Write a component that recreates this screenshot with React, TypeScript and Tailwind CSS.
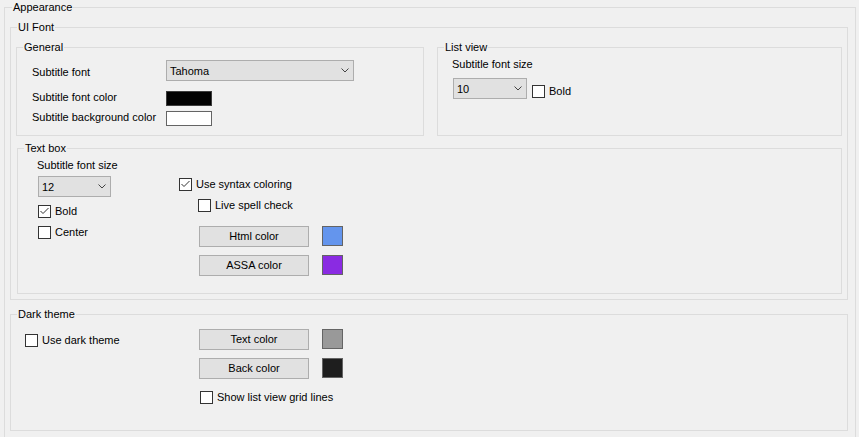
import React from "react";

const FONT = "font-['Liberation_Sans',Arial,sans-serif]";

function Group({
  label,
  className,
  legendClass,
  children,
}: {
  label: string;
  className: string;
  legendClass?: string;
  children?: React.ReactNode;
}) {
  return (
    <fieldset className={"border border-[#dcdcdc] " + className}>
      <legend className={"px-[1px] leading-[15px] " + (legendClass ?? "ml-[6px]")}>{label}</legend>
      {children}
    </fieldset>
  );
}

function Combo({ value, className }: { value: string; className: string }) {
  return (
    <div className={"flex h-[21px] border border-[#adadad] bg-[#e1e1e1] " + className}>
      <span className="flex-1 pl-[3px] pt-[4px] leading-[13px]">{value}</span>
      <svg width="8" height="5" viewBox="0 0 8 5" className="mt-[7px] mr-[4px]">
        <polyline points="0.5,0.5 4,4 7.5,0.5" fill="none" stroke="#444" strokeWidth="1" />
      </svg>
    </div>
  );
}

function Check({ checked, label, className }: { checked?: boolean; label: string; className?: string }) {
  return (
    <div className={"flex items-center " + (className ?? "")}>
      <div className="w-[13px] h-[13px] border border-[#333333] bg-white shrink-0">
        {checked && (
          <svg width="11" height="11" viewBox="0 0 11 11">
            <polyline points="1.5,5 4,7.5 9.5,2" fill="none" stroke="#333" strokeWidth="1" />
          </svg>
        )}
      </div>
      <span className="ml-[4px] leading-[13px] whitespace-nowrap">{label}</span>
    </div>
  );
}

function ColorButton({ label, swatch, className }: { label: string; swatch: string; className?: string }) {
  return (
    <div className={"flex items-start " + (className ?? "")}>
      <div className="w-[110px] h-[21px] border border-[#adadad] bg-[#e1e1e1] flex items-center justify-center leading-[13px]">
        {label}
      </div>
      <div className={"ml-[13px] w-[21px] h-[20px] border border-[#646464] " + swatch} />
    </div>
  );
}

export default function App() {
  return (
    <div className={"w-[859px] h-[437px] overflow-hidden bg-[#f0f0f0] text-[11px] text-black " + FONT}>
      <Group label="Appearance" className="ml-[4px] w-[852px] h-[470px]" legendClass="ml-[7px]">
        <div className="pt-[5px] pl-[5px]">
          <Group label="UI Font" className="w-[838px] h-[280px]">
            <div className="pt-[5px] pl-[5px] flex gap-[13px]">
              <Group label="General" className="w-[408px] h-[96px]">
                <div className="pl-[15px] pt-[5px]">
                  <div className="flex items-start h-[21px]">
                    <span className="w-[134px] mt-[6px] leading-[13px]">Subtitle font</span>
                    <Combo value="Tahoma" className="w-[188px]" />
                  </div>
                  <div className="flex items-start mt-[10px]">
                    <span className="w-[134px] leading-[13px]">Subtitle font color</span>
                    <div className="w-[46px] h-[15px] border border-[#3c3c3c] bg-black" />
                  </div>
                  <div className="flex items-start mt-[5px]">
                    <span className="w-[134px] leading-[13px]">Subtitle background color</span>
                    <div className="w-[46px] h-[15px] border border-[#646464] bg-white" />
                  </div>
                </div>
              </Group>
              <Group label="List view" className="w-[405px] h-[96px]">
                <div className="pl-[14px] pt-[3px]">
                  <div className="leading-[13px]">Subtitle font size</div>
                  <div className="flex items-start mt-[7px] pl-[1px]">
                    <Combo value="10" className="w-[74px]" />
                    <Check label="Bold" className="ml-[5px] mt-[7px]" />
                  </div>
                </div>
              </Group>
            </div>
            <div className="mt-[5px] ml-[6px]">
              <Group label="Text box" className="w-[825px] h-[153px]">
                <div className="flex pt-[3px]">
                  <div className="w-[161px] pl-[19px]">
                    <div className="leading-[13px]">Subtitle font size</div>
                    <Combo value="12" className="mt-[4px] ml-[1px] w-[73px]" />
                    <Check checked label="Bold" className="mt-[8px] ml-[1px]" />
                    <Check label="Center" className="mt-[8px] ml-[1px]" />
                  </div>
                  <div>
                    <Check checked label="Use syntax coloring" className="mt-[19px]" />
                    <Check label="Live spell check" className="mt-[8px] ml-[19px]" />
                    <ColorButton label="Html color" swatch="bg-[#6495ed]" className="mt-[14px] ml-[20px]" />
                    <ColorButton label="ASSA color" swatch="bg-[#8a2be2]" className="mt-[8px] ml-[20px]" />
                  </div>
                </div>
              </Group>
            </div>
          </Group>
          <div className="mt-[7px]">
            <Group label="Dark theme" className="w-[838px] h-[124px]">
              <div className="flex">
                <div className="w-[188px] pl-[14px]">
                  <Check label="Use dark theme" className="mt-[12px]" />
                </div>
                <div>
                  <ColorButton label="Text color" swatch="bg-[#999999]" className="mt-[7px]" />
                  <ColorButton label="Back color" swatch="bg-[#1e1e1e]" className="mt-[8px]" />
                  <Check label="Show list view grid lines" className="mt-[12px] ml-[1px]" />
                </div>
              </div>
            </Group>
          </div>
        </div>
      </Group>
    </div>
  );
}
